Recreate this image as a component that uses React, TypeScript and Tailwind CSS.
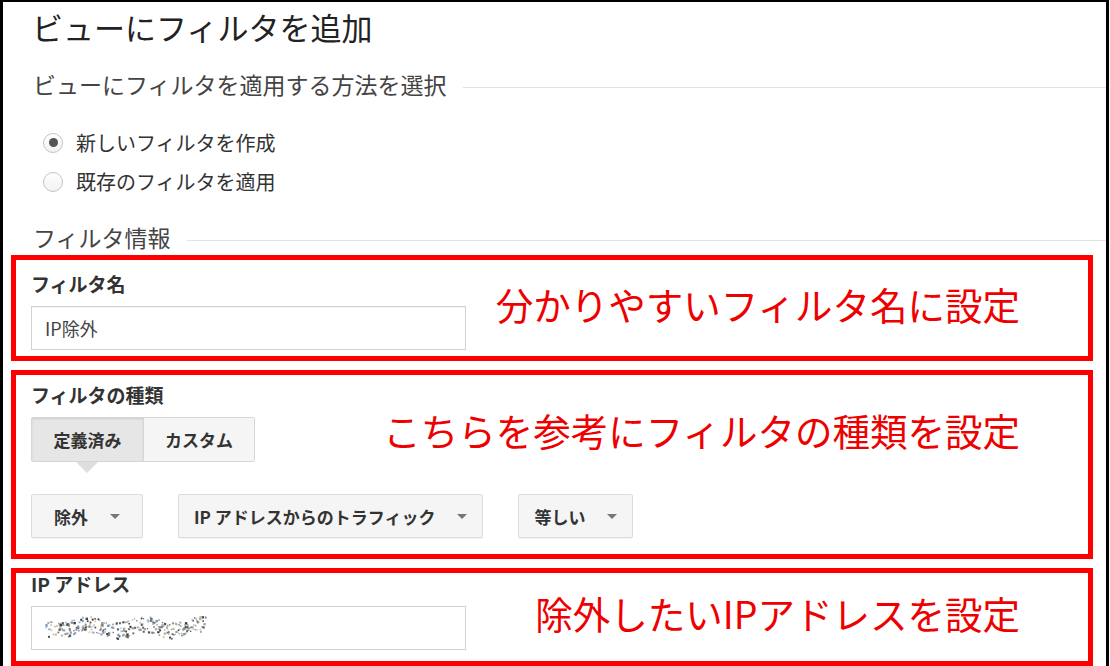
import * as React from "react"

const jp = { fontFamily: '"Noto Sans CJK JP", "Noto Sans", sans-serif' }

// pseudo random noise for the masked IP address
function noiseDots() {
  let seed = 7
  const rnd = () => {
    seed = (seed * 9301 + 49297) % 233280
    return seed / 233280
  }
  const colors = ["#222", "#333", "#6a8fb8", "#c9a46a", "#888", "#4a6a8a", "#999"]
  const dots: { x: number; y: number; c: string; o: number; s: number }[] = []
  for (let i = 0; i < 300; i++) {
    const x = rnd() * 160
    const base = 12 + Math.sin(x / 9) * 3
    const y = base + (rnd() - 0.5) * 16
    dots.push({ x, y, c: colors[Math.floor(rnd() * colors.length)], o: 0.45 + rnd() * 0.55, s: 1.2 + rnd() * 1.2 })
  }
  return dots
}

function Radio({ checked, label }: { checked?: boolean; label: string }) {
  return (
    <div className="flex h-[39px] items-center">
      <div className="ml-[40px] flex h-[20px] w-[20px] items-center justify-center rounded-full border border-[#c4c4c4] bg-gradient-to-b from-white to-[#f2f2f2]">
        {checked && <div className="h-[9px] w-[9px] rounded-full bg-[#555]" />}
      </div>
      <span className="ml-[13px] text-[20px] leading-none text-[#333]">{label}</span>
    </div>
  )
}

function SectionLine({ title }: { title: string }) {
  return (
    <div className="flex h-full items-center pl-[30px]">
      <span className="text-[23px] leading-none text-[#444]">{title}</span>
      <div className="ml-[16px] mt-[6px] h-px flex-1 bg-[#e3e3e3]" />
    </div>
  )
}

function Caret() {
  return (
    <svg width="10" height="5" viewBox="0 0 10 5" className="shrink-0">
      <path d="M0 0h10L5 5z" fill="#777" />
    </svg>
  )
}

function Dropdown({ label }: { label: string }) {
  return (
    <div className="flex h-[44px] min-w-[112px] items-center justify-center gap-[22px] rounded-[2px] border border-[#dcdcdc] bg-[#f5f5f5] px-[15px] shadow-[0_1px_1px_rgba(0,0,0,0.05)]">
      <span className="text-[17px] font-bold leading-none text-[#333]">{label}</span>
      <Caret />
    </div>
  )
}

export default function App() {
  const dots = React.useMemo(noiseDots, [])

  return (
    <div className="h-[666px] w-[1110px] overflow-hidden bg-white" style={jp}>
      <div className="h-full w-[1109px] border-l-[3px] border-r-[3px] border-t-2 border-black">
        <div className="flex h-[48px] items-center pl-[29px]">
          <h1 className="text-[31px] font-normal leading-none text-[#222]">ビューにフィルタを追加</h1>
        </div>

        <div className="h-[68px]">
          <SectionLine title="ビューにフィルタを適用する方法を選択" />
        </div>

        <div className="mt-[5px]">
          <Radio checked label="新しいフィルタを作成" />
          <Radio label="既存のフィルタを適用" />
        </div>

        <div className="mt-[18px] h-[36px]">
          <SectionLine title="フィルタ情報" />
        </div>

        {/* filter name */}
        <div className="ml-[8px] flex h-[106px] w-[1082px] border-[5px] border-[#ff0000] pl-[15px]">
          <div className="w-[435px]">
            <div className="mt-[13px] h-[22px] text-[19px] font-bold leading-[22px] text-[#333]">フィルタ名</div>
            <div className="mt-[11px] flex h-[44px] items-center border border-[#d2d2d2] pl-[13px] shadow-[inset_0_1px_1px_rgba(0,0,0,0.04)]">
              <span className="text-[18px] leading-none text-[#444]">IP除外</span>
            </div>
          </div>
          <div className="flex flex-1 items-center justify-end pb-[9px] pr-[68px]">
            <span className="text-[37.5px] leading-none text-[#ee0000]">分かりやすいフィルタ名に設定</span>
          </div>
        </div>

        {/* filter type */}
        <div className="ml-[8px] mt-[9px] flex h-[189px] w-[1082px] flex-col border-[5px] border-[#ff0000] pl-[15px]">
          <div className="mt-[9px] h-[22px] text-[19px] font-bold leading-[22px] text-[#333]">フィルタの種類</div>
          <div className="mt-[11px] flex items-start">
            <div className="flex h-[45px] w-[224px] rounded-[2px] border border-[#d6d6d6]">
              <div className="flex w-[112px] items-center justify-center border-r border-[#d6d6d6] bg-[#e6e6e6] shadow-[inset_0_1px_2px_rgba(0,0,0,0.1)]">
                <span className="text-[17px] font-bold leading-none text-[#333]">定義済み</span>
              </div>
              <div className="flex flex-1 items-center justify-center bg-[#f5f5f5]">
                <span className="text-[17px] font-bold leading-none text-[#333]">カスタム</span>
              </div>
            </div>
            <div className="-mt-[6px] flex flex-1 justify-end pr-[68px]">
              <span className="text-[37.5px] leading-none text-[#ee0000]">こちらを参考にフィルタの種類を設定</span>
            </div>
          </div>
          <svg width="22" height="11" viewBox="0 0 22 11" className="ml-[45px]">
            <path d="M0 0h22L11 11z" fill="#dedede" />
          </svg>
          <div className="mt-[21px] flex gap-[35px]">
            <Dropdown label="除外" />
            <Dropdown label="IP アドレスからのトラフィック" />
            <Dropdown label="等しい" />
          </div>
        </div>

        {/* ip address */}
        <div className="ml-[8px] mt-[9px] flex h-[98px] w-[1082px] border-[5px] border-[#ff0000] pl-[15px]">
          <div className="w-[435px]">
            <div className="h-[22px] text-[19px] font-bold leading-[22px] text-[#333]">IP アドレス</div>
            <div className="mt-[11px] flex h-[44px] items-center border border-[#d2d2d2] pl-[13px]">
              <svg width="162" height="26" viewBox="0 0 162 26">
                {dots.map((d, i) => (
                  <rect key={i} x={d.x} y={d.y} width={d.s} height={d.s} fill={d.c} opacity={d.o} />
                ))}
              </svg>
            </div>
          </div>
          <div className="flex flex-1 items-start justify-end pr-[68px] pt-[21px]">
            <span className="text-[37.5px] leading-none text-[#ee0000]">除外したいIPアドレスを設定</span>
          </div>
        </div>
      </div>
    </div>
  )
}
